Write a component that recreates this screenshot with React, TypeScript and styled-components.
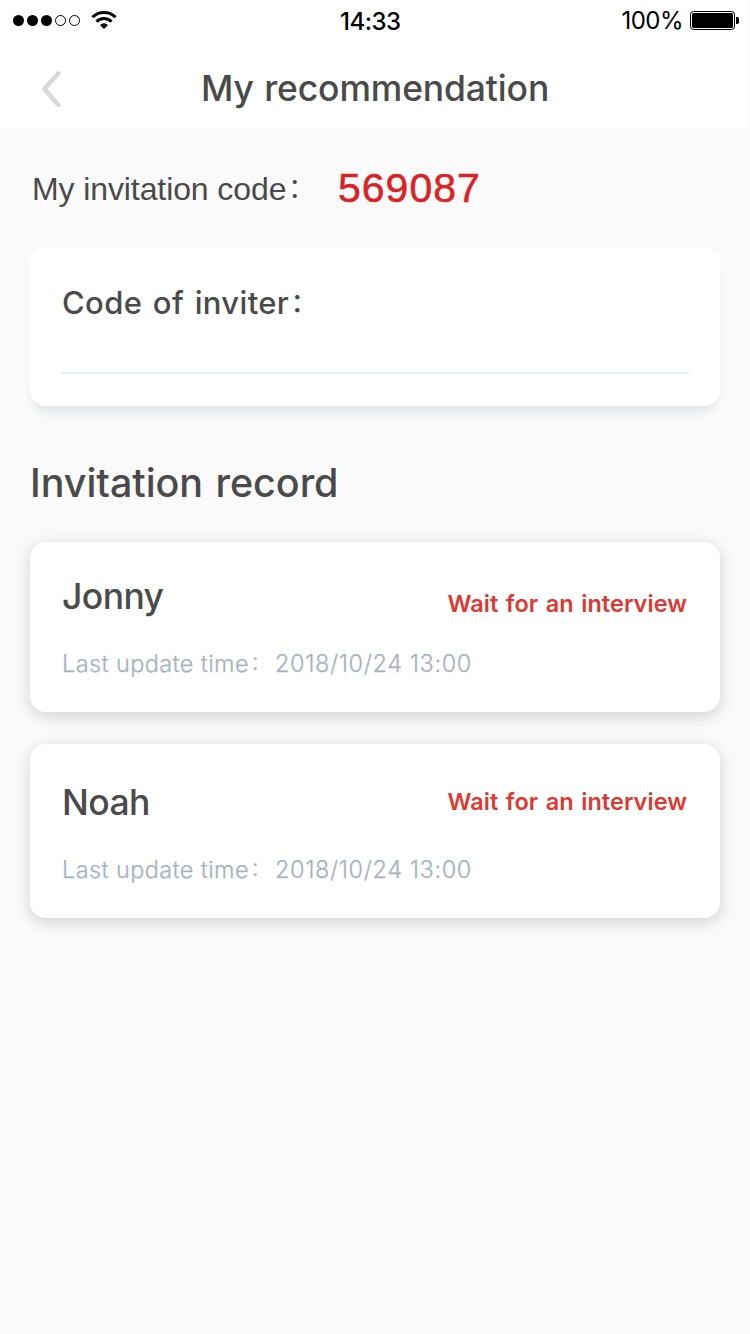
import React from "react";
import styled, { createGlobalStyle } from "styled-components";

const GlobalStyle = createGlobalStyle`
  * { box-sizing: border-box; }
  body { margin: 0; background: #fafafa; }
`;

const Screen = styled.div`
  width: 750px;
  height: 1334px;
  overflow: hidden;
  display: flex;
  flex-direction: column;
  background: #fafafa;
  color: #4a4a4a;
  font-family: Inter, "Noto Sans CJK SC", sans-serif;
  white-space: nowrap;
`;

const TopBar = styled.header`
  width: 748px;
  height: 128px;
  background: #fff;
`;

const StatusBar = styled.div`
  height: 42px;
  display: grid;
  grid-template-columns: 327px 1fr auto;
  padding: 0 9px 0 13px;
  color: #000;
  font-size: 24px;
  line-height: 42px;
`;

const Signal = styled.div`
  display: flex;
  align-items: center;
  height: 40px;
`;

const Clock = styled.span`
  padding-top: 1px;
  font-weight: 500;
  letter-spacing: -0.5px;
`;

const Battery = styled.div`
  display: flex;
  justify-content: flex-end;
  align-items: center;
  gap: 7px;
  height: 42px;
  letter-spacing: -0.5px;

  svg {
    margin-bottom: 1px;
  }
`;

const NavBar = styled.div`
  height: 86px;
  display: grid;
  grid-template-columns: 62px 1fr 60px;
  align-items: center;
  padding-top: 7px;
`;

const BackButton = styled.button`
  border: 0;
  padding: 0;
  background: none;
  height: 38px;
  display: flex;
  justify-content: flex-end;
`;

const Title = styled.h1`
  margin: 0;
  text-align: center;
  font-size: 35.5px;
  line-height: 48px;
  font-weight: 500;
  letter-spacing: -0.15px;
  word-spacing: 1.2px;
`;

const Content = styled.main`
  padding: 0 30px;
`;

const CodeRow = styled.div`
  display: flex;
  height: 120px;
  padding: 36px 0 0 2px;
  font-family: "Liberation Sans", "Noto Sans CJK SC", sans-serif;
  line-height: 48px;
`;

const CodeLabel = styled.span`
  width: 306px;
  padding-top: 1px;
  font-size: 32px;
  letter-spacing: -0.1px;
`;

const Colon = styled.span`
  margin-left: 0.06em;
  font-family: "Noto Sans CJK SC", sans-serif;
  font-size: 0.84em;
  line-height: 1;
  vertical-align: 2px;
`;

const CodeValue = styled.span`
  color: #dc2124;
  font-size: 41px;
  letter-spacing: 1px;
  -webkit-text-stroke: 0.5px #dc2124;
`;

const InviterCard = styled.section`
  height: 158px;
  padding: 33px 31px 31px;
  border-radius: 16px;
  background: #fff;
  box-shadow: 0 10px 10px -4px rgba(50, 60, 80, 0.11);
`;

const InviterLabel = styled.label`
  display: block;
  padding-left: 1px;
  font-size: 31px;
  line-height: 44px;
  font-weight: 500;
  letter-spacing: 0.35px;
  word-spacing: 2px;
`;

const InviterInput = styled.input`
  display: block;
  width: 628px;
  height: 49px;
  padding: 0;
  border: 0;
  border-bottom: 2px solid #e9eef1;
  outline: 0;
  background: transparent;
  font: 28px Inter, sans-serif;
`;

const SectionTitle = styled.h2`
  margin: 53px 0 35px;
  font-size: 39.5px;
  line-height: 48px;
  font-weight: 500;
  letter-spacing: -0.06px;
  word-spacing: 2px;
`;

const Records = styled.ul`
  margin: 0;
  padding: 0;
  list-style: none;
  display: flex;
  flex-direction: column;
  gap: 32px;
`;

const RecordCard = styled.li<{ $tall?: boolean }>`
  height: ${(p) => (p.$tall ? 174 : 170)}px;
  padding: ${(p) => (p.$tall ? "34px" : "30px")} 33px 0 32px;
  border-radius: 16px;
  background: #fff;
  box-shadow: 0 4px 16px rgba(0, 0, 0, 0.17);
`;

const RecordHead = styled.div`
  display: flex;
  justify-content: space-between;
  height: 48px;
`;

const Name = styled.h3`
  margin: 0;
  font-size: 35.5px;
  line-height: 49px;
  font-weight: 500;
  letter-spacing: -0.6px;
`;

const Status = styled.span<{ $tall?: boolean }>`
  padding-top: ${(p) => (p.$tall ? 0 : 8)}px;
  color: #dd3932;
  font-size: 23.5px;
  line-height: 48px;
  font-weight: 600;
  letter-spacing: 0.04px;
  word-spacing: 1.6px;
`;

const Updated = styled.p`
  display: flex;
  margin: 0;
  padding-top: 20px;
  color: #a7b2c2;
  font-size: 23.5px;
  line-height: 48px;
  font-weight: 300;
  -webkit-text-stroke: 0.25px #a7b2c2;
`;

const UpdatedLabel = styled.span`
  width: 213px;
  letter-spacing: 0.4px;
`;

const UpdatedTime = styled.span`
  letter-spacing: 0.6px;
`;

const records = [
  { name: "Jonny", status: "Wait for an interview", time: "2018/10/24 13:00", tall: false },
  { name: "Noah", status: "Wait for an interview", time: "2018/10/24 13:00", tall: true },
];

const SignalIcon = () => (
  <svg width="106" height="22" viewBox="0 0 106 22">
    {[5.5, 19.5, 33.5].map((x) => (
      <circle key={x} cx={x} cy="11.5" r="5.5" />
    ))}
    {[47.5, 61.5].map((x) => (
      <circle key={x} cx={x} cy="11.5" r="5" fill="none" stroke="#000" />
    ))}
    <g fill="none" stroke="#000" strokeWidth="3">
      <path d="M79.4 8.2a16.4 16.4 0 0 1 23.2 0" />
      <path d="M83.5 12.6a10.6 10.6 0 0 1 15 0" />
    </g>
    <path d="M87 16a5.6 5.6 0 0 1 8 0L91 20z" />
  </svg>
);

const BatteryIcon = () => (
  <svg width="49" height="19" viewBox="0 0 49 19">
    <rect x="0.5" y="0.5" width="44" height="18" rx="3" fill="none" stroke="#000" />
    <rect x="2" y="2" width="41" height="15" rx="1.5" />
    <path d="M46 6h1.2q1.8 0 1.8 1.8v3.4q0 1.8-1.8 1.8H46z" />
  </svg>
);

export default function App() {
  return (
    <Screen>
      <GlobalStyle />
      <TopBar>
        <StatusBar>
          <Signal><SignalIcon /></Signal>
          <Clock>14:33</Clock>
          <Battery>100%<BatteryIcon /></Battery>
        </StatusBar>
        <NavBar>
          <BackButton aria-label="Back">
            <svg width="21" height="38" viewBox="0 0 21 38" fill="none" stroke="#d8d8d8" strokeWidth="4.5" strokeLinecap="round" strokeLinejoin="round">
              <path d="M17.3 3.3L3.5 19.1l13.8 15.8" />
            </svg>
          </BackButton>
          <Title>My recommendation</Title>
        </NavBar>
      </TopBar>
      <Content>
        <CodeRow>
          <CodeLabel>My invitation code<Colon>：</Colon></CodeLabel>
          <CodeValue>569087</CodeValue>
        </CodeRow>
        <InviterCard>
          <InviterLabel htmlFor="inviter">Code of inviter<Colon>：</Colon></InviterLabel>
          <InviterInput id="inviter" />
        </InviterCard>
        <SectionTitle>Invitation record</SectionTitle>
        <Records>
          {records.map((r) => (
            <RecordCard key={r.name} $tall={r.tall}>
              <RecordHead>
                <Name>{r.name}</Name>
                <Status $tall={r.tall}>{r.status}</Status>
              </RecordHead>
              <Updated>
                <UpdatedLabel>Last update time<Colon>：</Colon></UpdatedLabel>
                <UpdatedTime>{r.time}</UpdatedTime>
              </Updated>
            </RecordCard>
          ))}
        </Records>
      </Content>
    </Screen>
  );
}
